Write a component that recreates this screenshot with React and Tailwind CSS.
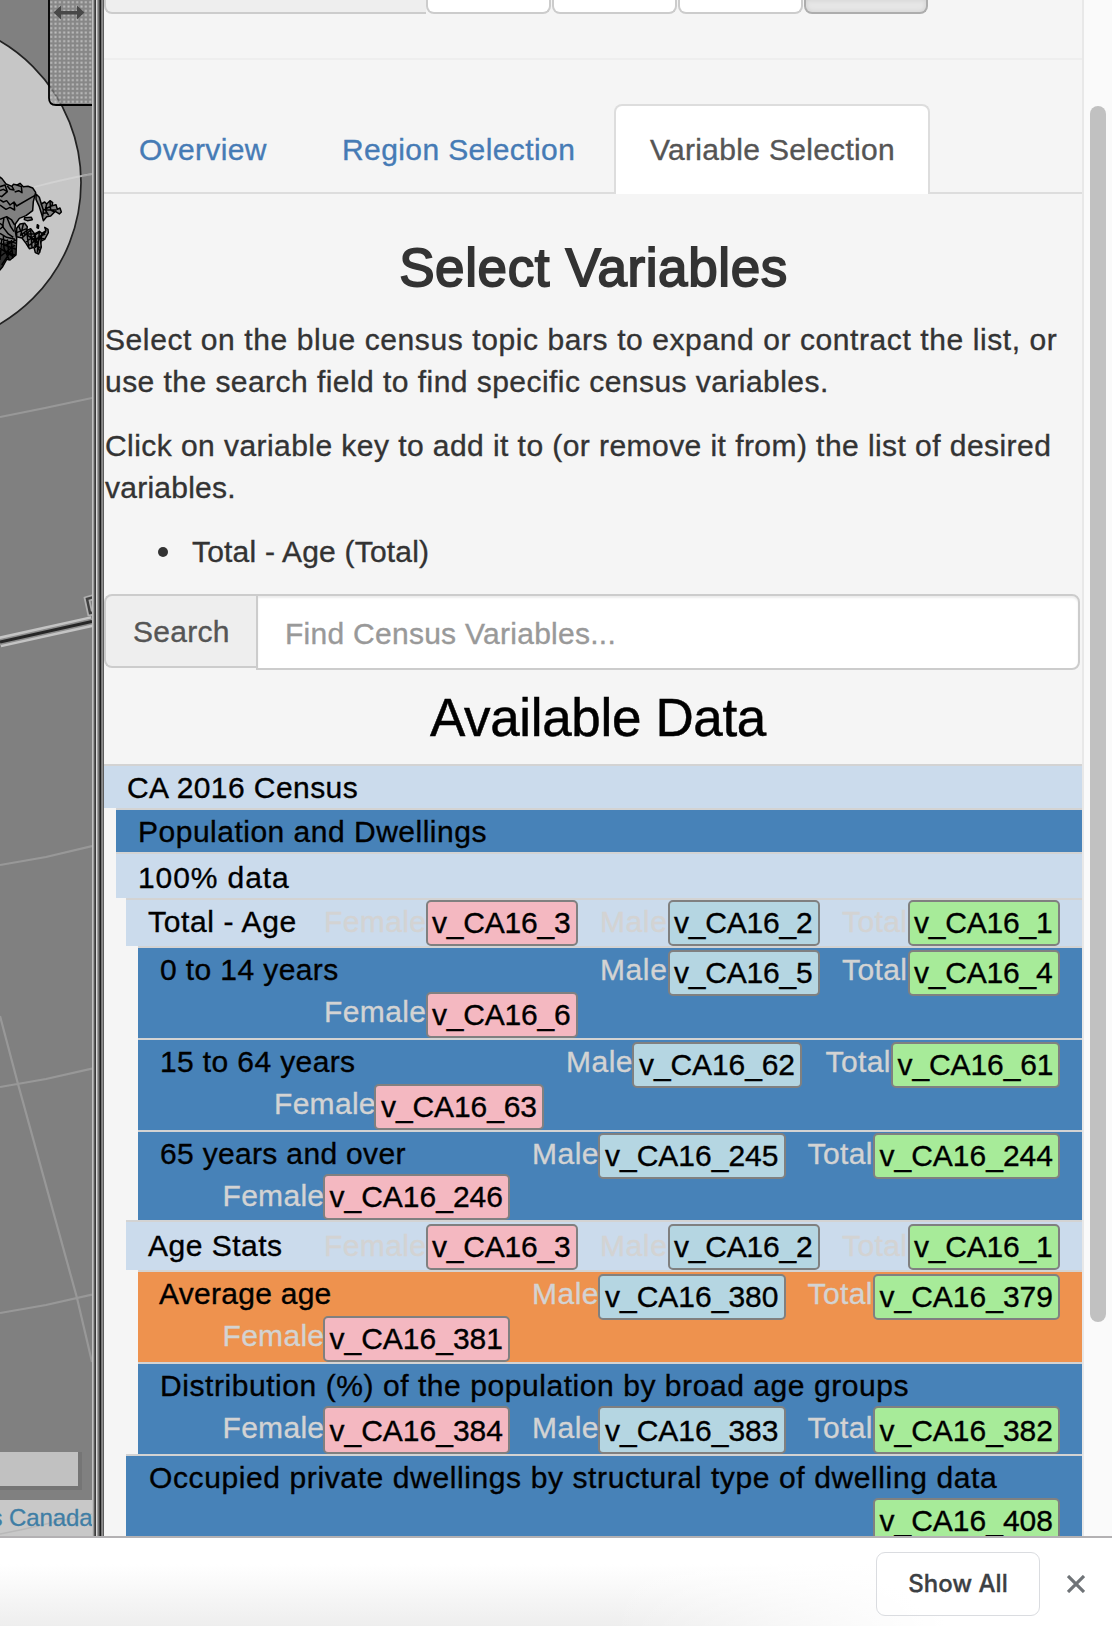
import React from "react";

const FILL = {
  Female: "bg-[#f4b8c1]",
  Male: "bg-[#b5d6e2]",
  Total: "bg-[#a7eb99]",
};

const LABEL = {
  Female: "w-[101px] pl-[1px] tracking-[0.3px]",
  Male: "w-[66px] tracking-[0.5px]",
  Total: "w-[65px] tracking-[0.4px]",
};
const LABEL_WIDE = {
  Female: "w-[102px] tracking-[0.4px]",
  Male: "w-[68px] tracking-[0.6px]",
  Total: "w-[66px] tracking-[0.4px]",
};

// Chip geometry by the number of digits in the variable key.
const CHIP = {
  1: "w-[152px] pl-[4px] tracking-[-0.2px]",
  2: "w-[169.5px] pl-[5px] tracking-[-0.1px]",
  3: "w-[187.5px] pl-[5px]",
};
const GAP = { 1: "gap-[22px]", 2: "gap-[24px]", 3: "gap-[22px]" };

function Variable({ kind, num, label = true, tall, shift = "" }) {
  const labels = num.length === 1 ? LABEL_WIDE : LABEL;
  return (
    <div className="flex shrink-0 items-start">
      {label && <span className={"leading-[43px] text-[#d3d3d3] " + labels[kind]}>{kind}</span>}
      <span
        className={
          "rounded-[5px] border-2 border-[#808080] whitespace-nowrap " +
          (tall ? "h-[48px] leading-[46px] " : "h-[46px] leading-[42px] ") +
          CHIP[num.length] + " " + FILL[kind] + " " + shift
        }
      >
        v_CA16_{num}
      </span>
    </div>
  );
}

function Row({ indent, bg, height, title, titleClass = "", first, second, secondClass = "", shift = "mt-[2px]", secondShift }) {
  return (
    <div className={indent}>
      <div className={"flex flex-col border-t-2 border-[#d3d3d3] " + bg + " " + height}>
        <div className="flex h-[42px] shrink-0 items-start justify-between px-[22px]">
          <span className={"shrink-0 leading-[44px] whitespace-nowrap " + titleClass}>{title}</span>
          {first && <div className={"flex " + GAP[first[0][1].length]}>
            {first.map(([k, n]) => <Variable key={k} kind={k} num={n} shift={shift} />)}
          </div>}
        </div>
        {second && <div className={"flex justify-end " + secondClass + " " + GAP[second[0][1].length]}>
          {second.map(([k, n, noLabel, tall]) => <Variable key={k} kind={k} num={n} label={!noLabel} tall={tall} shift={secondShift} />)}
        </div>}
      </div>
    </div>
  );
}

function StatRow({ title, height, offset = "", titleClass }) {
  return (
    <div className="pl-[22px]">
      <div className={"flex items-start justify-between border-t-2 border-[#d3d3d3] px-[22px] " + LIGHT + " " + height + " " + offset}>
        <span className={"leading-[44px] whitespace-nowrap " + titleClass}>{title}</span>
        <div className="flex gap-[22px]">
          <Variable kind="Female" num="3" />
          <Variable kind="Male" num="2" />
          <Variable kind="Total" num="1" />
        </div>
      </div>
    </div>
  );
}

const LIGHT = "bg-[#cbdbec]";
const BLUE = "bg-[#4782b8]";

const STRIPES = [
  "bg-[#c0c0c0]", "bg-[#9a9a9a]", "bg-[#5a5a5a]", "bg-[#3a3a3a]", "bg-[#dadada]", "bg-[#a0a0a0]",
  "bg-[#777777]", "bg-[#484848]", "bg-[#1c1c1c]", "bg-[#777777]", "bg-[#8e8e8e]", "bg-[#5c5c5c]",
];

function MapView() {
  return (
    <svg width="92" height="1536" viewBox="0 0 92 1536" className="block shrink-0 bg-[#808080]">
      <defs>
        <pattern id="dots" width="4.33" height="4.33" patternUnits="userSpaceOnUse" x="49" y="0">
          <rect x="1.2" y="1.2" width="2" height="2" fill="#d0d0d0" opacity="0.75" />
        </pattern>
      </defs>
      <circle cx="-83" cy="182.5" r="164" fill="#c6c6c6" stroke="#222" strokeWidth="1.7" />
      <g transform="translate(0 160) scale(0.3333)" fill="#808080" stroke="#000" strokeWidth="4.500" strokeLinejoin="round">
        <path d="M-5 48L6 56L18 72L36 79L40 73L52 75L60 70L70 80L84 79L98 84L107 97L100 125L98 152L78 167L58 175L46 192L45 210L50 235L48 285L30 300L20 298L8 320L-5 335Z" />
        <path fill="none" d="M0 80L15 75L22 95L5 110L0 108M22 95L10 88L0 92M36 79L42 90L30 88L22 78M50 75L64 80L66 98L56 92L44 96M0 120L10 126L20 122L30 135L42 126L50 138L105 106M42 126L44 150L30 142L18 148L0 135M0 178L20 170L35 180L44 195M12 173L8 200L25 222L40 232M20 170L32 200L42 215M0 208L10 198L0 190M0 220L20 232L45 238M0 236L30 245L48 250M10 225L12 265L28 300M22 238L26 280L45 285M0 250L48 268M0 265L40 290M5 240L0 300M34 240L38 295M15 256L48 240M0 290L45 255M5 315L35 270" />
        <path d="M108 102L118 112L124 132L134 126L140 132L150 122L158 128L156 137L168 134L172 148L180 144L184 156L178 162L166 154L152 168L140 170L130 182L126 166L118 140L108 118Z" />
        <path fill="none" d="M124 132L130 150L128 170M140 132L136 150L146 166M130 150L156 137M136 150L170 150M150 124L152 150L164 156M130 160L142 158" />
        <path d="M74 173L94 172L97 179L82 182L73 179Z" />
        <path fill="none" d="M112 194L116 197L115 205L111 203Z" />
        <path d="M50 205L60 192L74 190L82 200L80 212L92 206L104 222L118 214L126 220L138 212L134 202L144 208L145 218L134 238L122 244L124 262L116 282L106 278L102 262L88 266L78 250L66 234L50 230Z" />
        <path fill="none" d="M50 218L80 206M56 198L70 232M70 192L62 226L80 212L86 262M66 234L92 210L96 262M72 222L104 222L120 278M78 246L118 216L112 278M88 256L138 214M92 236L134 236M104 222L106 262L126 222L122 250M102 258L122 262M84 226L110 248M112 232L136 222" />
        <path fill="#000" stroke="none" d="M8 250L26 244L46 256L48 284L30 297L16 296L8 318L0 326L0 285Z" opacity="0.65" />
      </g>
      <path d="M34 187Q65 179 92 174" fill="none" stroke="#d4d4d4" strokeWidth="1.800" opacity="0.8" />
      <path d="M82 176.500L92 174" fill="none" stroke="#808080" strokeWidth="2" opacity="0.5" />
      <path d="M0 417L45 408L92 398M0 865L46 857L92 846M0 1087L46 1079L92 1068.500M0 1313L46 1305L92 1294.500M0 1016L18 1084L77 1298L92 1362" fill="none" stroke="#a0a0a0" strokeWidth="2.200" opacity="0.75" />
      <path d="M0 642L92 621.500" stroke="#c4c4c4" strokeWidth="11" />
      <path d="M0 642L92 621.500" stroke="#8c8c8c" strokeWidth="6" />
      <path d="M0 642L92 621.500" stroke="#262626" strokeWidth="3" />
      <path d="M94 597L87 599L90 613L96 612" fill="none" stroke="#b0b0b0" strokeWidth="6" />
      <path d="M94 597L87 599L90 613L96 612" fill="none" stroke="#404040" strokeWidth="2.500" />
      <path d="M94 -4H49V98Q49 105 56 105H94" fill="#8a8a8a" fillOpacity="0.65" />
      <path d="M94 -4H49V98Q49 105 56 105H94" fill="url(#dots)" stroke="#000" strokeWidth="1.8" />
      <path d="M53.500 12.500L61 5.500V11H77V5.500L84.500 12.500L77 19.500V14.500H61V19.500Z" fill="#484848" />
      <rect x="-5" y="1452" width="87" height="38" fill="#757575" />
      <rect x="-5" y="1452" width="83" height="34" fill="#c1c1c1" />
      <rect x="0" y="1500" width="92" height="36" fill="#c8c8c8" />
      <path d="M0 1534Q22 1530 46 1524L92 1514" fill="none" stroke="#b8b8b8" strokeWidth="1.500" />
      <text x="92.500" y="1526" textAnchor="end" fontSize="24" fill="#3f7ea5" fontFamily="Liberation Sans, sans-serif" letterSpacing="-0.1" stroke="#3f7ea5" strokeWidth="0.3">s Canada</text>
    </svg>
  );
}

export default function App() {
  return (
    <div className="flex h-[1626px] w-[1112px] flex-col overflow-hidden bg-[#f5f5f5] font-['Liberation_Sans',sans-serif] text-[30px] text-black [-webkit-text-stroke:0.35px_currentColor]">
      <div className="flex h-[1536px] shrink-0 overflow-hidden">
        <MapView />
        <div className="flex w-[12px] shrink-0">
          {STRIPES.map((c, i) => <div key={i} className={"w-px " + c} />)}
        </div>

        <main className="w-[978px] shrink-0 overflow-hidden">
          <div className="flex h-[14px]">
            <div className="w-[322px] rounded-bl-[8px] border-b-2 border-l-2 border-[#ccc] bg-[#eee]" />
            <div className="flex gap-[1px]">
              <div className="w-[125px] rounded-b-[8px] border-2 border-t-0 border-[#ccc] bg-white" />
              <div className="w-[125px] rounded-b-[8px] border-2 border-t-0 border-[#ccc] bg-white" />
              <div className="w-[125px] rounded-b-[8px] border-2 border-t-0 border-[#ccc] bg-white" />
              <div className="w-[123.5px] rounded-b-[8px] border-2 border-t-0 border-[#adadad] bg-[#e6e6e6] shadow-[inset_0_0_5px_rgba(0,0,0,0.1)]" />
            </div>
          </div>
          <div className="mt-[44px] h-[2px] bg-[#eee]" />

          <nav className="mt-[44px] flex h-[90px] leading-[42px] whitespace-nowrap text-[#467bb5]">
            <div className="w-[201px] border-b-2 border-[#ddd] pt-[25px] pl-[35px] tracking-[0.33px]">Overview</div>
            <div className="w-[309px] border-b-2 border-[#ddd] pt-[25px] pl-[37px] tracking-[0.4px]">Region Selection</div>
            <div className="w-[315.500px] rounded-t-[8px] border-2 border-b-0 border-[#ddd] bg-white pt-[23px] pl-[34px] tracking-[0.3px] text-[#555]">Variable Selection</div>
            <div className="flex-1 border-b-2 border-[#ddd]" />
          </nav>

          <section className="h-[400px] pt-[44px] leading-[42px] text-[#333]">
            <h2 className="pl-[1px] text-center text-[53px] leading-[60px] tracking-[0.6px] [-webkit-text-stroke:1.8px_#333]">Select Variables</h2>
            <p className="mt-[21px] pl-[1px] whitespace-nowrap">
              <span className="block tracking-[0.59px]">Select on the blue census topic bars to expand or contract the list, or</span>
              <span className="block tracking-[0.455px]">use the search field to find specific census variables.</span>
            </p>
            <p className="mt-[22px] pl-[1px] whitespace-nowrap">
              <span className="block tracking-[0.44px]">Click on variable key to add it to (or remove it from) the list of desired</span>
              <span className="block tracking-[0.25px]">variables.</span>
            </p>
            <div className="mt-[22px] flex items-center pl-[54px] tracking-[0.2px]">
              <span className="mr-[24px] size-[10px] rounded-full bg-[#333]" />
              Total - Age (Total)
            </div>
          </section>

          <div className="flex h-[76px] w-[976px] items-start">
            <div className="h-[74px] w-[152px] rounded-l-[8px] border-2 border-r-0 border-[#ccc] bg-[#eee] pt-[15px] pl-[27px] leading-[42px] tracking-[0.3px] text-[#555]">Search</div>
            <div className="h-[76px] flex-1 rounded-r-[8px] border-2 border-[#ccc] bg-white pt-[17px] pl-[27px] leading-[42px] tracking-[0.27px] text-[#999] shadow-[inset_0_2px_2px_rgba(0,0,0,0.075)]">Find Census Variables...</div>
          </div>

          <h2 className="h-[94px] pt-[18px] pl-[10px] text-center text-[53px] leading-[60px] tracking-[-0.35px] [-webkit-text-stroke:0.5px_#000]">Available Data</h2>

          <Row bg={LIGHT} height="h-[44px]" title="CA 2016 Census" titleClass="ml-[1px] tracking-[0.43px]" />
          <Row indent="pl-[12px]" bg={BLUE} height="h-[44px]" title="Population and Dwellings" titleClass="tracking-[0.5px]" />
          <Row indent="pl-[12px]" bg={LIGHT} height="h-[46px]" title="100% data" titleClass="mt-[2px] tracking-[0.9px]" />
          <StatRow title="Total - Age" height="h-[48px]" titleClass="tracking-[0.65px]" />
          <Row indent="pl-[34px]" bg={BLUE} height="h-[92px]" title="0 to 14 years" titleClass="tracking-[0.4px]" first={[["Male", "5"], ["Total", "4"]]} second={[["Female", "6"]]} secondClass="pr-[504px]" secondShift="mt-[2px]" />
          <Row indent="pl-[34px]" bg={BLUE} height="h-[92px]" title="15 to 64 years" titleClass="tracking-[0.38px]" first={[["Male", "62"], ["Total", "61"]]} second={[["Female", "63"]]} secondClass="pr-[538.5px]" secondShift="mt-[2px]" />
          <Row indent="pl-[34px]" bg={BLUE} height="h-[90px]" title="65 years and over" titleClass="tracking-[0.33px]" first={[["Male", "245"], ["Total", "244"]]} shift="mt-[1px]" second={[["Female", "246"]]} secondClass="pr-[572px]" />
          <StatRow title="Age Stats" height="h-[50px]" offset="pt-[2px]" titleClass="tracking-[0.5px]" />
          <Row indent="pl-[34px]" bg="bg-[#ee924e]" height="h-[92px]" title="Average age" titleClass="-ml-[1px] tracking-[0.27px]" first={[["Male", "380"], ["Total", "379"]]} second={[["Female", "381"]]} secondClass="pr-[572px]" secondShift="mt-[2px]" />
          <Row indent="pl-[34px]" bg={BLUE} height="h-[92px]" title="Distribution (%) of the population by broad age groups" titleClass="tracking-[0.56px]" second={[["Female", "384", false, true], ["Male", "383", false, true], ["Total", "382", false, true]]} secondClass="pr-[22px]" />
          <Row indent="pl-[22px]" bg={BLUE} height="h-[92px]" title="Occupied private dwellings by structural type of dwelling data" titleClass="ml-[1px] tracking-[0.61px]" second={[["Total", "408", true]]} secondClass="pr-[22px]" />
        </main>

        <div className="flex w-[30px] shrink-0 border-l-2 border-[#e8e8e8] bg-[#fafafa] pt-[106px] pl-[6px]">
          <div className="h-[1216px] w-[16px] rounded-full bg-[#c1c1c1]" />
        </div>
      </div>

      <footer className="flex h-[90px] items-start justify-end border-t-2 border-[#b3b1b3] bg-[linear-gradient(to_right,transparent_55%,#fff_85%),linear-gradient(to_bottom,#fff_30%,#eee)] pt-[14px] pr-[27px]">
        <div className="flex h-[64px] w-[164px] items-center justify-center rounded-[9px] border border-[#dadce0] bg-white/50 font-['Inter',sans-serif] text-[24px] font-medium text-[#3c4043]">Show All</div>
        <svg width="18" height="18" viewBox="0 0 18 18" className="mt-[23px] ml-[27px]" stroke="#6f7377" strokeWidth="3.200"><path d="M1 1L17 17M17 1L1 17" /></svg>
      </footer>
    </div>
  );
}
